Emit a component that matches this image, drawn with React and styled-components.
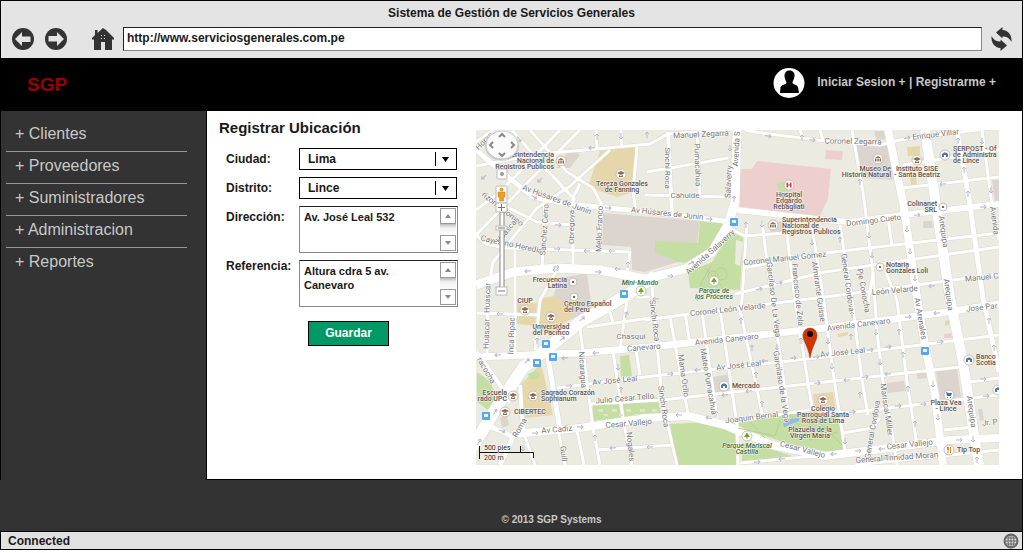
import React from "react";
import styled, { createGlobalStyle } from "styled-components";

const GlobalStyle = createGlobalStyle`
  *, *::before, *::after { box-sizing: border-box; }
  body {
    margin: 0;
    background: #fff;
    color: #1a1a1a;
    font: bold 12px/16px "Liberation Sans", Arial, sans-serif;
  }
`;

const Frame = styled.div`
  display: flex;
  flex-direction: column;
  min-height: calc(100vh - 3px);
  margin: 0 3px 3px 0;
  border: 1px solid #000;
  border-left: 0;
  background: #333;
`;

const Chrome = styled.header`
  padding-bottom: 7px;
  border-left: 1px solid #000;
  background: #e4e4e4;
`;

const WindowTitle = styled.div`
  padding-bottom: 2px;
  line-height: 24px;
  text-align: center;
`;

const Toolbar = styled.div`
  display: flex;
  align-items: center;
  gap: 9px;
  padding: 0 10px 0 11px;
`;

const ToolGroup = styled.div`
  display: flex;
  gap: 11px;
  margin-right: 16px;
`;

const ToolButton = styled.button`
  display: flex;
  padding: 0;
  border: 0;
  background: none;
  color: #333;
  cursor: pointer;
`;

const Address = styled.input`
  flex: 1;
  min-width: 0;
  height: 24px;
  padding: 0 3px 2px;
  border: 1px solid #888;
  border-top-color: #222;
  border-left-color: #222;
  border-radius: 0;
  background: #fff;
  color: #1a1a1a;
  font: inherit;
  outline: 0;
`;

const Banner = styled.div`
  display: flex;
  align-items: center;
  justify-content: space-between;
  min-height: 53px;
  padding: 0 26px 4px 27px;
  background: #000;
`;

const Brand = styled.h1`
  margin: 0;
  padding-top: 4px;
  color: #990000;
  font-size: 19px;
  line-height: 24px;
`;

const Account = styled.nav`
  display: flex;
  align-items: center;
  gap: 12px;
  color: #c8c8c8;

  span { padding-bottom: 2px; }
  a { color: inherit; text-decoration: none; }
`;

const Body = styled.div`
  display: flex;
  flex: 1;
  border-left: 1px solid #000;
`;

const Sidebar = styled.nav`
  flex: 0 0 206px;
  padding: 9px 19px 0 5px;
  border-right: 1px solid #000;
`;

const Menu = styled.ul`
  margin: 0;
  padding: 0;
  list-style: none;
`;

const MenuItem = styled.li`
  padding: 0 0 4px 9px;
  border-bottom: 1px solid #999;
  color: #c8c8c8;
  font-size: 16px;
  font-weight: normal;
  line-height: 27px;

  &:last-child { border-bottom: 0; }
  a { color: inherit; text-decoration: none; }
`;

const Panel = styled.main`
  display: flex;
  flex: 1;
  align-items: flex-start;
  gap: 18px;
  min-width: 0;
  padding: 0 23px 14px 12px;
  border-bottom: 1px solid #000;
  background: #fff;
`;

const Form = styled.form`
  flex: 0 0 239px;
  padding-top: 7px;
`;

const FormTitle = styled.h2`
  margin: 0 0 10px;
  font-size: 15px;
  line-height: 20px;
`;

const Fields = styled.div`
  display: grid;
  grid-template-columns: 73px 1fr;
  row-gap: 7px;
  padding-left: 7px;
`;

const Label = styled.label`
  line-height: ${(p) => p.$line}px;
`;

const Control = styled.div`
  position: relative;
  display: flex;
`;

const Select = styled.select`
  width: 158px;
  height: 22px;
  padding: 0 28px 0 8px;
  border: 1px solid #000;
  border-radius: 0;
  background: #fff;
  color: #1a1a1a;
  font: inherit;
  appearance: none;
`;

const SelectArrow = styled.svg`
  position: absolute;
  top: 4px;
  right: 6px;
  pointer-events: none;
`;

const TextArea = styled.textarea`
  width: 159px;
  height: 47px;
  padding: 3px 20px 0;
  padding-left: 4px;
  border: 1px solid #888;
  border-top-color: #222;
  border-radius: 0;
  background: #fff;
  color: #1a1a1a;
  font: inherit;
  font-size: 11px;
  line-height: 14px;
  resize: none;
  overflow: hidden;
  outline: 0;
`;

const Scroller = styled.div`
  position: absolute;
  top: 2px;
  right: 2px;
  bottom: 2px;
  display: flex;
  flex-direction: column;
  justify-content: space-between;
  background: linear-gradient(#fff 16px, #bbb 16px, #f2f2f2 20px, #fff 28px);
`;

const ScrollButton = styled.button`
  display: flex;
  align-items: center;
  justify-content: center;
  width: 16px;
  height: 16px;
  padding: 0;
  border: 1px solid #999;
  background: #fff;
`;

const Submit = styled.button`
  width: 81px;
  height: 25px;
  margin: 14px 0 0 89px;
  padding: 0 0 2px;
  border: 1px solid #000;
  background: #009966;
  color: #fff;
  font: inherit;
  cursor: pointer;
`;

const MapBox = styled.div`
  flex: 1;
  min-width: 0;
  padding-top: 19px;
`;

const MapCanvas = styled.svg`
  display: block;
  width: 100%;
  height: auto;
  background: #ecebe1;
  font-family: Roboto, "Liberation Sans", sans-serif;
  font-weight: 400;
`;

const Street = styled.text`
  fill: #777;
  stroke: #fff;
  stroke-width: 1px;
  paint-order: stroke;
  font-size: 8px;
  text-anchor: middle;
`;

const Place = styled.text`
  fill: ${(p) => (p.$park ? "#3c7032" : "#5c5350")};
  stroke: #f6f5ef;
  stroke-width: 1px;
  paint-order: stroke;
  font-size: 7px;
  font-weight: 500;
  font-style: ${(p) => (p.$park ? "italic" : "normal")};
  text-anchor: ${(p) => p.$anchor || "middle"};
`;

const ScaleText = styled.text`
  fill: #222;
  font-size: 7px;
  stroke: #fff;
  stroke-width: 1px;
  paint-order: stroke;
`;

const Footer = styled.footer`
  padding: 34px 0 5px 81px;
  color: #c8c8c8;
  font-size: 10px;
  line-height: 12px;
  text-align: center;
`;

const StatusBar = styled.div`
  display: flex;
  align-items: center;
  justify-content: space-between;
  height: 18px;
  padding: 0 3px 0 7px;
  border-top: 1px solid #000;
  border-left: 1px solid #000;
  background: #e1e1e1;
`;

const ArrowIcon = ({ flip }) => (
  <svg width="22" height="22" viewBox="0 0 22 22">
    <circle cx="11" cy="11" r="11" fill="currentColor" />
    <path
      d="M3 11 L10 4 V8.5 H18.5 V14 H10 V18 Z"
      fill="#e4e4e4"
      transform={flip ? "rotate(180 11 11)" : undefined}
    />
  </svg>
);

const HomeIcon = () => (
  <svg width="22" height="22" viewBox="0 0 22 22">
    <path
      fill="currentColor"
      d="M11 0 L14 2 L22 10 V11.500 H20 V22 H13 V14 H9 V22 H2 V11.500 H0 V10 L3 7 V2 H5.500 V5 Z"
    />
    <path fill="#e4e4e4" d="M9 7h1v1H9zM12 7h1v1H12zM9 10h1v1H9zM12 10h1v1H12z" />
  </svg>
);

const RefreshIcon = () => {
  const arm = "M5 5.500 L11.500 0 V3 C17.500 3.500 21 8 20.500 15 C18 10.500 15 9.500 11.500 9.500 V11.500 Z";
  return (
    <svg width="21" height="24" viewBox="0 0 21 24">
      <path fill="currentColor" d={arm} />
      <path fill="currentColor" d={arm} transform="rotate(180 10.5 12)" />
    </svg>
  );
};

const UserIcon = () => (
  <svg width="32" height="32" viewBox="0 0 32 32">
    <ellipse cx="16" cy="16" rx="15.500" ry="15" fill="#fff" />
    <path
      fill="#000"
      d="M16.500 3.500 C20 3.500 22 6 21.500 9.500 C21 12.500 19.500 14 19.500 16 C20 17.500 24 17.500 25 20 L26 26 H7 L7.500 20 C9 17.500 13 17.500 13.500 16 C13.500 14 11.500 12.500 11.500 9 C11.500 5.500 13.500 3.500 16.500 3.500 Z"
    />
  </svg>
);

const GlobeIcon = () => (
  <svg width="16" height="16" viewBox="0 0 16 16">
    <circle cx="8" cy="8" r="6.500" fill="#ddd" stroke="#666" strokeWidth="2" />
    <g fill="none" stroke="#666" strokeWidth="1">
      <ellipse cx="8" cy="8" rx="3" ry="6.500" />
      <path d="M8 2v12M2 8h12M3 5h10M3 11h10" />
    </g>
  </svg>
);

const Scrollbar = ({ name }) => (
  <Scroller>
    <ScrollButton type="button" aria-label={`Subir ${name}`}>
      <svg width="6" height="4"><path d="M0 4L3 0L6 4Z" fill="#888" /></svg>
    </ScrollButton>
    <ScrollButton type="button" aria-label={`Bajar ${name}`}>
      <svg width="6" height="4"><path d="M0 0L3 4L6 0Z" fill="#888" /></svg>
    </ScrollButton>
  </Scroller>
);

const DropDown = ({ id, value }) => (
  <Control>
    <Select id={id} defaultValue={value}>
      <option>{value}</option>
    </Select>
    <SelectArrow width="18" height="14">
      <path d="M1 0h1v14H1z M8 5h7L11.500 10Z" />
    </SelectArrow>
  </Control>
);

/* Map areas: [fill, points] */
const AREAS = [
  ["#e6d7ab", "600,151 636,147 633,192 617,197 588,187"],
  ["#dcd5cf", "603,213 700,221 697,243 678,245 678,262 645,272 632,270 631,247 602,245"],
  ["#c5dea3", "700,221 726,223 720,241 708,255 688,263 678,262 655,252 655,241 698,243"],
  ["#c5dea3", "731,232 743,238 740,290 690,288 688,272 712,262"],
  ["#ecebe1", "736,240 743,242 740,266 735,264"],
  ["#ecebe1", "653,290 688,290 688,300 653,300"],
  ["#edd0cd", "757,161 831,169 828,199 820,216 740,207 740,169 752,169"],
  ["#edd0cd", "826,150 843,151 842,160 825,159"],
  ["#c5dea3", "776,184 782,181 788,183 787,191 780,192"],
  ["#dcd5cf", "772,221 784,222 782,233 770,233"],
  ["#dcd5cf", "856,145 889,145 893,180 860,178"],
  ["#dcd5cf", "874,131 890,131 891,139 876,140"],
  ["#e6d7ab", "907,147 920,146 920,155 908,156"],
  ["#e6d7ab", "910,177 916,177 917,186 911,186"],
  ["#dcd5cf", "923,221 932,221 933,228 923,228"],
  ["#dcd5cf", "992,180 999,180 999,205 995,203"],
  ["#dcd5cf", "570,148 580,155 570,168 556,168"],
  ["#dcd5cf", "560,278 587,273 592,310 565,322 550,305"],
  ["#e6d7ab", "542,298 556,296 573,316 552,332 537,330"],
  ["#e6d7ab", "517,303 537,303 535,326 517,324"],
  ["#e6d7ab", "520,385 541,363 553,415 525,418"],
  ["#c5dea3", "528,374 535,371 541,374 537,379 529,379"],
  ["#c5dea3", "477,372 491,382 496,402 488,410 477,402"],
  ["#c5dea3", "620,356 629,355 632,376 621,377"],
  ["#c5dea3", "593,405 657,397 661,413 593,421"],
  ["#dcd5cf", "712,377 730,374 732,390 715,393"],
  ["#c5dea3", "670,424 706,422 735,434 737,465 677,465"],
  ["#c5dea3", "742,443 770,449 802,459 742,463"],
  ["#c5dea3", "728,424 812,411 838,418 844,450 822,452 780,441"],
  ["#e6d7ab", "813,394 833,392 836,410 815,412"],
  ["#e6d7ab", "838,334 848,332 848,335 838,337"],
  ["#dcd5cf", "885,383 904,381 906,391 887,393"],
  ["#dcd5cf", "916,373 926,372 927,378 918,379"],
  ["#dcd5cf", "936,371 957,368 961,397 940,400"],
  ["#edd0cd", "944,334 951,333 952,338 944,338"],
  ["#e6d7ab", "945,321 949,320 949,325 945,326"],
  ["#dcd5cf", "978,409 982,409 984,420 980,421"],
  ["#dcd5cf", "500,418 507,416 509,425 502,428"],
  ["#dcd5cf", "883,455 892,454 893,461 883,462"],
  ["#8fb9ef", "783,423 790,419 799,418 799,421 791,424 784,427"],
];

/* Streets: [width, points] */
const ROADS = [
  [3, "476,166 540,154 650,144 668,134 735,129"],
  [3, "580,130 520,190 476,235"],
  [3, "560,130 500,192 476,210"],
  [3, "610,150 570,186 537,208 493,262 486,300"],
  [3, "512,130 545,168 575,200"],
  [3, "530,130 567,172 593,188 602,205 598,248"],
  [3, "476,142 500,125"],
  [3, "580,184 573,197 573,268"],
  [3, "545,198 542,268"],
  [3, "476,235 486,244 505,248 630,252 627,275"],
  [3, "503,205 537,222 572,225"],
  [3, "515,250 515,353"],
  [3, "558,268 540,300 535,350"],
  [3, "637,147 633,192 636,212"],
  [3, "596,130 597,148"],
  [3, "621,130 622,147"],
  [3, "647,172 728,158"],
  [3, "645,195 728,197"],
  [4, "668,132 672,215"],
  [3, "697,134 700,196"],
  [5, "476,150 497,168 533,197 567,204 650,212 732,222"],
  [9, "476,285 513,272 557,268 600,270 645,279 685,269 712,252 728,225 735,202 737,130"],
  [6, "737,210 825,220 850,222 903,215 999,204"],
  [3, "745,130 755,132 825,141 880,145 900,140 999,127"],
  [3, "800,130 803,138"],
  [3, "820,130 823,140"],
  [3, "731,229 745,236 825,230"],
  [3, "747,222 742,300 740,315"],
  [3, "762,222 772,300 788,410"],
  [3, "787,235 795,300 812,408"],
  [3, "812,228 823,295 833,372 845,450"],
  [3, "743,268 825,253 999,233"],
  [3, "735,294 825,272 999,247"],
  [3, "852,130 863,192 873,272 868,302"],
  [3, "873,272 877,332 883,382 893,438 897,465"],
  [3, "840,225 852,300 862,380 868,415"],
  [3, "888,218 892,246"],
  [3, "903,165 999,150"],
  [3, "902,188 999,177"],
  [3, "885,270 897,300 907,382 917,445"],
  [8, "888,130 903,202 917,298 925,345 935,395 943,465"],
  [10, "925,130 937,212 950,298 963,362 973,428 979,465"],
  [5, "957,130 970,205 983,298 999,372"],
  [3, "982,130 992,205 999,240"],
  [3, "645,320 720,310 825,297 999,274"],
  [3, "587,327 650,318"],
  [7, "476,357 580,353 650,347 825,328 940,313 999,304"],
  [3, "557,388 645,377 825,357 999,335"],
  [3, "590,404 662,400 825,382 960,367"],
  [3, "725,423 815,409 847,413 999,395"],
  [3, "970,382 999,378"],
  [3, "843,433 873,428 880,418"],
  [3, "944,430 972,427"],
  [8, "513,434 580,428 645,418 688,416 725,425 772,445 825,456 873,450 950,440 999,438"],
  [3, "855,465 999,450"],
  [3, "740,463 825,455"],
  [3, "597,450 672,445"],
  [3, "652,285 658,355 662,400 677,465"],
  [3, "670,317 688,414"],
  [3, "685,313 690,344"],
  [3, "702,312 717,418"],
  [3, "720,309 737,425 738,465"],
  [3, "740,309 763,418"],
  [3, "580,328 593,428 600,465"],
  [5, "548,357 560,430"],
  [3, "613,352 624,424 632,465"],
  [3, "627,300 620,350"],
  [3, "636,350 640,375"],
  [3, "558,430 565,465"],
  [3, "524,434 535,465"],
  [3, "577,430 584,465"],
  [3, "608,305 613,323"],
  [3, "477,313 540,315"],
  [3, "488,300 487,357"],
  [4, "477,352 502,388 510,402"],
  [4, "520,385 523,432"],
  [5, "485,424 513,437 500,465"],
  [3, "525,418 523,434"],
  [3, "637,297 650,297"],
  [12, "655,276 627,295 580,322 523,368 500,402 472,448"],
];

const STREET_NAMES = [
  ["Av Húsares de Junín", 556, 202, 20],
  ["Av Húsares de Junín", 667, 216, 6],
  ["Cayetano Heredia", 511, 247, 12],
  ["Horac", 486, 143, -45],
  ["rizon y Bonino", 501, 211, 38],
  ["Huascar", 509, 232, -50],
  ["Sanchez Cerro", 547, 230, -86],
  ["Obregoya", 574, 227, -90],
  ["Mello Franco", 602, 229, -88],
  ["Manuel Zegarra", 701, 137, -3],
  ["Sinchi Roca", 665, 168, 90],
  ["Pumacahua", 695, 165, 88],
  ["Cahuide", 685, 198, 0],
  ["Salaverry", 731, 182, -87],
  ["Avenida S", 739, 149, -87],
  ["Avenida Salaverry", 712, 254, -42],
  ["Coronel Zegarra", 853, 144, 1],
  ["Enrique Villar", 936, 137, -7],
  ["Domingo Cueto", 874, 223, -7],
  ["Coronel Manuel Gomez", 785, 261, -6],
  ["Manuel C", 982, 280, -6],
  ["Arequipa", 941, 232, 82],
  ["Arequipa", 946, 295, 82],
  ["Arequipa", 969, 412, 82],
  ["Avenida", 992, 221, 82],
  ["León Velarde", 895, 293, -5],
  ["General Cordova", 845, 283, 82],
  ["Pje Conocha", 861, 291, 80],
  ["Garcilaso De La Vega", 771, 300, 83],
  ["Francisco de Zela", 795, 295, 84],
  ["Almirante Guisse", 816, 292, 82],
  ["Coronel León Velarde", 728, 312, -6],
  ["Huascar", 490, 298, -88],
  ["Huascar", 489, 334, -88],
  ["Inca Ripac", 514, 336, -88],
  ["Chasqui", 631, 339, 0],
  ["Canevaro", 644, 350, -5],
  ["Avenida Canevaro", 727, 342, -6],
  ["Avenida Canevaro", 859, 327, -7],
  ["Nicaragua", 580, 370, 86],
  ["Av José Leal", 615, 383, -5],
  ["Av José Leal", 739, 368, -6],
  ["Av José Leal", 843, 355, -6],
  ["Julio Cesar Tello", 625, 401, -5],
  ["Sinchi Roca", 652, 321, 83],
  ["Sinchi Roca", 661, 407, 82],
  ["Mama Ocllo", 681, 376, 82],
  ["Mateo Pumacahua", 706, 382, 80],
  ["Garcilaso de la Vega", 779, 387, 81],
  ["Joaquin Bernal", 752, 420, -7],
  ["Av Cadiz", 557, 432, -5],
  ["Cesar Vallejo", 629, 426, -5],
  ["Cesar Vallejo", 802, 452, 15],
  ["Cesar Vallejo", 910, 447, -6],
  ["Av Arenales", 918, 319, 80],
  ["Mariscal Miller", 884, 410, 82],
  ["General Cordova", 875, 430, -80],
  ["General Trinidad Moran", 897, 460, -4],
  ["Jose Par", 982, 310, -6],
  ["Nogales", 628, 447, 84],
  ["Guill", 561, 454, 84],
  ["racocha", 484, 372, 60],
  ["Roma", 522, 429, -60],
  ["Jr. P", 990, 425, -5],
];

/* Places: [lines, x, y, anchor, park] */
const PLACES = [
  [["Superintendencia", "Nacional de", "Registros Publicos"], 554, 157, "end"],
  [["Tereza Gonzales", "de Fanning"], 622, 186],
  [["Hospital", "Edgardo", "Rebagliati"], 789, 197],
  [["Superintendencia", "Nacional de", "Registros Publicos"], 782, 222, "start"],
  [["Museo De", "Historia Natural"], 891, 171, "end"],
  [["Instituto SISE", "- Santa Beatriz"], 917, 171],
  [["SERPOST - Of", "de Administra", "de Lince"], 953, 151, "start"],
  [["Colinanet", "SRL"], 937, 206, "end"],
  [["Notaria", "Gonzales Loli"], 886, 267, "start"],
  [["Frecuencia", "Latina"], 567, 282, "end"],
  [["Centro Español", "del Perú"], 564, 306, "start"],
  [["CIUP"], 525, 303],
  [["Universidad", "del Pacífico"], 551, 329],
  [["Mini-Mundo"], 640, 285, "middle", true],
  [["Parque de", "los Próceres"], 714, 293, "middle", true],
  [["Escuela", "rado UPC"], 507, 395, "end"],
  [["CIBERTEC"], 514, 414, "start"],
  [["Sagrado Corazón", "Sophianum"], 541, 395, "start"],
  [["Mercado"], 732, 388, "start"],
  [["Parque Mariscal", "Castilla"], 747, 448, "middle", true],
  [["Colegio", "Parroquial Santa", "Rosa de Lima"], 823, 411],
  [["Plazuela de la", "Virgen María"], 810, 432],
  [["Plaza Vea", "- Lince"], 946, 405],
  [["Banco", "Scotia"], 976, 359, "start"],
  [["Tip Top"], 957, 452, "start"],
];

/* Round place badges: [x, y, kind] */
const BADGES = [
  [561, 161, "bank"], [621, 174, "school"], [773, 225, "bank"], [878, 159, "bank"],
  [917, 160, "school"], [525, 310, "school"], [551, 317, "school"], [513, 396, "school"],
  [533, 396, "school"], [505, 412, "school"], [823, 400, "school"], [573, 282, "dot"],
  [574, 297, "dot"], [943, 207, "dot"], [880, 267, "dot"], [945, 155, "blue"],
  [724, 386, "blue"], [949, 395, "cart"], [969, 360, "blue"], [998, 390, "blue"],
  [949, 450, "food"], [789, 185, "hospital"], [641, 291, "tree"], [714, 281, "tree"],
  [747, 436, "tree"],
];

const STATIONS = [
  [734, 222], [624, 294], [546, 344], [537, 363], [553, 357], [486, 416], [925, 351],
];

/* One-way marks: [x, y, angle] */
const ONE_WAYS = [
  [597, 137, -90], [621, 136, 90], [647, 135, -90], [592, 148, 175], [484, 177, 135],
  [519, 139, 55], [540, 180, 135], [534, 197, 35], [608, 208, 5], [558, 225, 5],
  [557, 249, 0], [587, 251, 180], [612, 251, 180], [528, 271, 175], [556, 267, 0],
  [556, 270, 180], [598, 272, 5], [618, 269, 180], [628, 265, -90], [503, 282, -90],
  [670, 276, 0], [691, 263, -25], [730, 148, 90], [734, 199, -90], [709, 219, 5],
  [768, 136, 10], [802, 138, -90], [812, 140, 5], [746, 225, -90], [762, 224, 90],
  [812, 242, 90], [759, 289, -15], [779, 283, -10], [860, 182, -90], [907, 138, -8],
  [958, 141, -90], [982, 141, 90], [964, 170, -90], [943, 184, 175], [991, 190, 90],
  [968, 194, -90], [983, 207, -5], [917, 215, -5], [907, 229, 90], [869, 235, 90],
  [840, 240, -90], [910, 251, 90], [872, 255, 90], [915, 278, 90], [843, 260, -90],
  [932, 286, 175], [908, 317, -7], [937, 313, 175], [852, 315, -90], [828, 341, 90],
  [851, 337, -90], [876, 332, 90], [899, 332, -90], [888, 347, -7], [870, 350, -7],
  [832, 366, 90], [880, 362, 90], [903, 355, -90], [940, 342, -7], [888, 374, 175],
  [847, 380, 175], [865, 377, -7], [933, 384, 90], [908, 389, -90], [860, 395, -90],
  [852, 412, -7], [898, 406, -7], [923, 404, -7], [938, 417, 90], [915, 424, -90],
  [845, 441, 90], [834, 454, 175], [858, 451, 0], [882, 449, 175], [959, 440, 0],
  [973, 439, 90], [994, 348, -90], [989, 321, -90], [983, 379, 0], [986, 396, -5],
  [656, 299, 175], [699, 299, 180], [741, 321, -90], [752, 348, -90], [777, 347, 90],
  [801, 341, -90], [816, 357, -7], [793, 358, -7], [765, 361, 175], [670, 374, -7],
  [698, 370, 175], [756, 375, -90], [749, 391, 175], [725, 395, 175], [817, 383, -7],
  [762, 404, -90], [716, 414, -90], [679, 415, 180], [709, 418, 195], [498, 355, 175],
  [565, 358, 175], [596, 353, 175], [569, 386, 0], [618, 367, 90], [621, 390, -90],
  [582, 319, -40], [562, 339, -40], [527, 361, -45], [495, 412, -60], [479, 442, -60],
  [502, 431, 20], [535, 433, 0], [580, 427, 5], [595, 438, -90], [500, 314, 180],
  [537, 341, -90], [626, 315, -75], [613, 448, 175], [650, 447, 180], [757, 462, -7],
  [782, 459, 175], [977, 460, -90], [523, 448, 90],
];

const Badge = ({ x, y, kind }) => {
  const colour = { tree: "#6aa718", blue: "#4a77b5", cart: "#3973c8", food: "#e78a2b", hospital: "#d33", dot: "#9b5b45" }[kind] || "#8f6a4c";
  const shapes = {
    school: <path d="M-4 -1L0 -3L4 -1L0 1Z M-2 1v2h4v-2L0 2Z" />,
    bank: <path d="M-3 -1L0 -3L3 -1Z M-3 -0.500h1.500v3H-3z M-0.700 -0.500h1.400v3h-1.400z M1.500 -0.500H3v3H1.500z" />,
    dot: <path d="M-1 -1h2v2h-2z" />,
    blue: <path d="M-3 -1L-1 -2.500H1L3 -1V2H1V0H-1V2H-3Z" />,
    cart: <path d="M-3 -3h1l1 1h4l-1 3h-4zM-2 2h1v1h-1zM1 2h1v1H1z" />,
    food: <path d="M-2 -3h2v3h-0.500v3h-1v-3H-2zM1 -3h1v6H1z" />,
    hospital: <path d="M-2.500 -2.500h1.500v2h2v-2h1.500v5H1v-2h-2v2h-1.500z" />,
    tree: <path d="M0 -3.500L3 1H0.500V3h-1V1H-3Z" />,
  };
  return (
    <g transform={`translate(${x} ${y})`} fill={colour}>
      <circle r={kind === "dot" ? 4 : 5} fill="#fff" stroke="#c5bfb5" />
      {shapes[kind]}
    </g>
  );
};

const LocationMap = () => (
  <MapCanvas viewBox="476 130 523 335" role="img" aria-label="Mapa de Lince">
    {AREAS.map(([fill, points]) => <polygon key={points} fill={fill} points={points} />)}
    <g fill="none" strokeLinejoin="round">
      {ROADS.map(([w, points]) => <polyline key={points} points={points} stroke="#dbd8ce" strokeWidth={w + 1} />)}
      {ROADS.map(([w, points]) => <polyline key={points} points={points} stroke="#fff" strokeWidth={w} />)}
      <g stroke="#b5cf94">
        <circle cx="713" cy="276" r="5" />
        <circle cx="721" cy="274" r="6" />
        <path d="M700 285L711 266M705 268L722 286M738 428L775 436L780 420M750 422L765 438M790 414L810 440L838 432M800 440L815 418L842 445" />
      </g>
    </g>
    <g fill="#dfe8c6">
      {[598, 612, 626, 640, 652].map((x) => <rect key={x} x={x} y="409" width="5" height="3" />)}
      {[604, 619, 634].map((x) => <rect key={x} x={x} y="414" width="4" height="2" />)}
    </g>
    <g fill="none" stroke="#b4b9c9">
      {ONE_WAYS.map(([x, y, a]) => (
        <path key={`${x}-${y}`} d="M-3 0H3M1 -2L3 0L1 2" transform={`translate(${x} ${y}) rotate(${a})`} />
      ))}
    </g>
    {STREET_NAMES.map(([name, x, y, a]) => (
      <Street key={`${name}-${x}-${y}`} transform={`translate(${x} ${y}) rotate(${a})`}>{name}</Street>
    ))}
    {BADGES.map(([x, y, kind]) => <Badge key={`${x}-${y}`} x={x} y={y} kind={kind} />)}
    {STATIONS.map(([x, y]) => (
      <g key={x} transform={`translate(${x} ${y})`}>
        <rect x="-4" y="-4" width="8" height="8" rx="1" fill="#57a8ee" />
        <path d="M-2 -2H2V1H-2Z" fill="#e9f4ff" />
      </g>
    ))}
    {PLACES.map(([lines, x, y, anchor, park]) => (
      <Place key={`${lines[0]}-${x}`} y={y} $anchor={anchor} $park={park}>
        {lines.map((line, i) => <tspan key={line} x={x} y={y + i * 6}>{line}</tspan>)}
      </Place>
    ))}

    <ellipse cx="502" cy="146" rx="17" ry="15" fill="#999" opacity="0.400" />
    <ellipse cx="502" cy="145" rx="16" ry="14" fill="#fafafa" stroke="#ccc" />
    <path d="M499 137l3-3l3 3M499 153l3 3l3-3M493 142l-3 3l3 3M511 142l3 3l-3 3" fill="none" stroke="#888" strokeWidth="2" />
    <path d="M500 212h4v78h-4z" fill="#fff" stroke="#888" />
    <g fill="#fff" stroke="#bbb">
      <rect x="497" y="169" width="10" height="10" rx="1" />
      <rect x="496" y="186" width="11" height="17" rx="1" />
      <rect x="496" y="203" width="11" height="9" />
      <rect x="496" y="226" width="11" height="4" />
      <rect x="496" y="287" width="11" height="8" />
    </g>
    <circle cx="502" cy="174" r="2" fill="#999" />
    <path d="M498 207.500h7M501.500 204v7M498 228h7M498 291h7" stroke="#777" />
    <circle cx="501.500" cy="189.500" r="2" fill="#f0a020" />
    <path d="M498 192h7v5h-1.500v4h-4v-4H498z" fill="#f0a020" stroke="#c97b10" strokeWidth="0.500" />

    <path d="M479.500 446v13M479.500 452.500H533.500V458M520.500 446v6" fill="none" stroke="#111" />
    <ScaleText x="484" y="450">500 pies</ScaleText>
    <ScaleText x="484" y="460">200 m</ScaleText>

    <path d="M810 358C808 346 803 341 803 335A7 7 0 0 1 817 335C817 341 812 346 810 358Z" fill="#d23600" stroke="#8f2a0a" strokeWidth="0.500" />
    <circle cx="810" cy="334" r="3" fill="#000" />
  </MapCanvas>
);

const SECTIONS = ["Clientes", "Proveedores", "Suministradores", "Administracion", "Reportes"];

export default function App() {
  return (
    <>
      <GlobalStyle />
      <Frame>
        <Chrome>
          <WindowTitle>Sistema de Gestión de Servicios Generales</WindowTitle>
          <Toolbar>
            <ToolGroup>
              <ToolButton aria-label="Atrás"><ArrowIcon /></ToolButton>
              <ToolButton aria-label="Adelante"><ArrowIcon flip /></ToolButton>
            </ToolGroup>
            <ToolButton aria-label="Inicio"><HomeIcon /></ToolButton>
            <Address aria-label="Dirección web" defaultValue="http://www.serviciosgenerales.com.pe" />
            <ToolButton aria-label="Recargar"><RefreshIcon /></ToolButton>
          </Toolbar>
        </Chrome>

        <Banner>
          <Brand>SGP</Brand>
          <Account>
            <UserIcon />
            <span><a href="#sesion">Iniciar Sesion +</a> | <a href="#registro">Registrarme +</a></span>
          </Account>
        </Banner>

        <Body>
          <Sidebar>
            <Menu>
              {SECTIONS.map((name) => (
                <MenuItem key={name}><a href={`#${name}`}>+ {name}</a></MenuItem>
              ))}
            </Menu>
          </Sidebar>
          <Panel>
            <Form onSubmit={(e) => e.preventDefault()}>
              <FormTitle>Registrar Ubicación</FormTitle>
              <Fields>
                <Label htmlFor="ciudad" $line={22}>Ciudad:</Label>
                <DropDown id="ciudad" value="Lima" />
                <Label htmlFor="distrito" $line={22}>Distrito:</Label>
                <DropDown id="distrito" value="Lince" />
                <Label htmlFor="direccion" $line={22}>Dirección:</Label>
                <Control>
                  <TextArea id="direccion" defaultValue="Av. José Leal 532" />
                  <Scrollbar name="dirección" />
                </Control>
                <Label htmlFor="referencia" $line={12}>Referencia:</Label>
                <Control>
                  <TextArea id="referencia" defaultValue="Altura cdra 5 av. Canevaro" />
                  <Scrollbar name="referencia" />
                </Control>
              </Fields>
              <Submit type="submit">Guardar</Submit>
            </Form>
            <MapBox><LocationMap /></MapBox>
          </Panel>
        </Body>

        <Footer>© 2013 SGP Systems</Footer>
        <StatusBar>
          <span>Connected</span>
          <GlobeIcon />
        </StatusBar>
      </Frame>
    </>
  );
}
